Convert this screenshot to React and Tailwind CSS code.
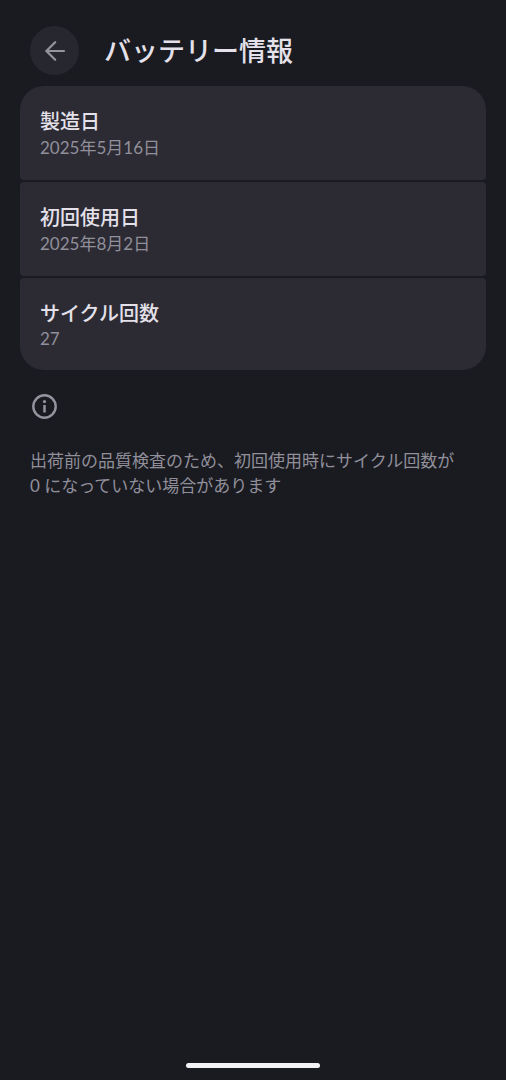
const rows = [
  { label: "製造日", value: "2025年5月16日" },
  { label: "初回使用日", value: "2025年8月2日" },
  { label: "サイクル回数", value: "27" },
];

function BackIcon() {
  return (
    <svg viewBox="0 0 24 24" className="size-6" fill="none" stroke="currentColor" strokeWidth="2.2">
      <path d="M21 12H3.6M12.2 3.2L3.4 12l8.8 8.8" strokeLinecap="round" />
    </svg>
  );
}

function InfoIcon() {
  return (
    <svg viewBox="0 0 29 29" className="size-[29px] text-[#94939e]" fill="none" stroke="currentColor">
      <circle cx="14.5" cy="14.5" r="11.2" strokeWidth="2.4" />
      <path d="M14.5 13v7.5" strokeWidth="2.5" />
      <circle cx="14.5" cy="9.6" r="1.6" fill="currentColor" stroke="none" />
    </svg>
  );
}

function InfoRow({ label, value }) {
  return (
    <div className="group bg-[#2c2b34] rounded-[4px] px-5 pt-[22px] pb-[18px] first:rounded-t-[24px] last:rounded-b-[24px]">
      <dt className="text-[20px] leading-[26px] font-medium text-[#e4e1ea]">{label}</dt>
      <dd className="text-[17px] leading-[28px] group-last:leading-[26px] text-[#908f9a]">{value}</dd>
    </div>
  );
}

export default function App() {
  return (
    <div className="min-h-screen flex flex-col bg-[#1a1b21] font-['Lato','Noto_Sans_CJK_JP',sans-serif]">
      <header className="flex items-center gap-[25px] px-[30px] pt-[26px] pb-[11px]">
        <button
          type="button"
          aria-label="戻る"
          className="size-[49px] rounded-full bg-[#26272f] text-[#94939e] flex items-center justify-center"
        >
          <BackIcon />
        </button>
        <h1 className="text-[27px] leading-[36px] font-medium text-[#e4e1ea]">バッテリー情報</h1>
      </header>

      <main className="flex-1 px-5">
        <dl className="flex flex-col gap-[2px]">
          {rows.map((row) => (
            <InfoRow key={row.label} label={row.label} value={row.value} />
          ))}
        </dl>

        <section className="pl-[10px] pr-5 pt-[22px]">
          <InfoIcon />
          <p className="mt-[27px] text-[17px] leading-[25px] text-[#908f9a]">
            出荷前の品質検査のため、初回使用時にサイクル回数が 0 になっていない場合があります
          </p>
        </section>
      </main>

      <footer className="flex justify-center pb-[12px]">
        <div className="w-[134px] h-[5px] rounded-full bg-[#f2f2f4]" />
      </footer>
    </div>
  );
}
